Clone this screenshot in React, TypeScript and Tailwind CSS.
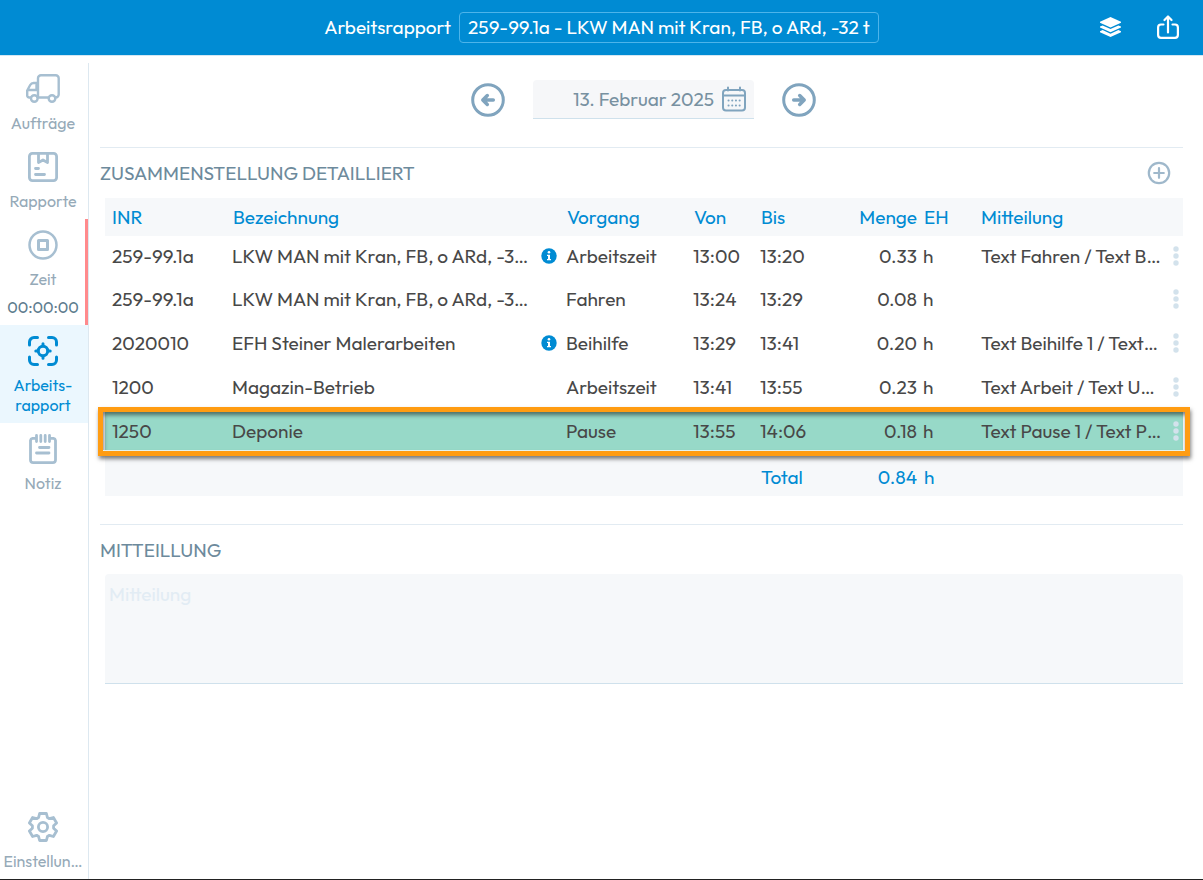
import { useState, type ReactNode } from 'react';

type Entry = {
  inr: string;
  name: string;
  info?: boolean;
  activity: string;
  from: string;
  to: string;
  amount: string;
  note: string;
  selected?: boolean;
};

const entries: Entry[] = [
  { inr: '259-99.1a', name: 'LKW MAN mit Kran, FB, o ARd, -3…', info: true, activity: 'Arbeitszeit', from: '13:00', to: '13:20', amount: '0.33', note: 'Text Fahren / Text B…' },
  { inr: '259-99.1a', name: 'LKW MAN mit Kran, FB, o ARd, -3…', activity: 'Fahren', from: '13:24', to: '13:29', amount: '0.08', note: '' },
  { inr: '2020010', name: 'EFH Steiner Malerarbeiten', info: true, activity: 'Beihilfe', from: '13:29', to: '13:41', amount: '0.20', note: 'Text Beihilfe 1 / Text…' },
  { inr: '1200', name: 'Magazin-Betrieb', activity: 'Arbeitszeit', from: '13:41', to: '13:55', amount: '0.23', note: 'Text Arbeit / Text U…' },
  { inr: '1250', name: 'Deponie', activity: 'Pause', from: '13:55', to: '14:06', amount: '0.18', note: 'Text Pause 1 / Text P…', selected: true },
];

export default function App() {
  return (
    <div className="flex min-h-screen flex-col border-b border-[#222] bg-white font-['Outfit','Lato',sans-serif] text-[19px] leading-6 text-[#484848]">
      <Header />
      <div className="flex flex-1">
        <Sidebar />
        <main className="min-w-0 flex-1">
          <DateBar />
          <Summary />
          <Message />
        </main>
      </div>
    </div>
  );
}

function Header() {
  return (
    <header className="grid h-14 shrink-0 grid-cols-[1fr_auto_1fr] items-center border-b border-[#d3e7f3] bg-[#008bd3] pb-px text-white">
      <span />
      <div className="flex items-center gap-2">
        <h1>Arbeitsrapport</h1>
        <button type="button" className="h-[31px] rounded border border-[#4db4ea] px-2 leading-7">
          259-99.1a - LKW MAN mit Kran, FB, o ARd, -32 t
        </button>
      </div>
      <div className="flex items-center justify-end gap-9 pr-6">
        <button type="button" aria-label="Ebenen">
          <LayersIcon />
        </button>
        <button type="button" aria-label="Teilen">
          <ShareIcon />
        </button>
      </div>
    </header>
  );
}

function Sidebar() {
  return (
    <nav className="mt-[7px] flex w-[89px] shrink-0 flex-col border-r border-[#dde8f0] text-base leading-5 text-[#96aab8]">
      <NavItem icon={<TruckIcon />}>Aufträge</NavItem>
      <NavItem icon={<ReportIcon />}>Rapporte</NavItem>
      <div className="border-r-[3px] border-[#ff8a8c] pl-[3px]">
        <NavItem icon={<StopIcon />}>
          Zeit
          <span className="mt-2 block text-[#5f7d8f]">00:00:00</span>
        </NavItem>
      </div>
      <NavItem icon={<TargetIcon />} active>
        Arbeits-
        <br />
        rapport
      </NavItem>
      <NavItem icon={<NoteIcon />}>Notiz</NavItem>
      <div className="mt-auto">
        <NavItem icon={<GearIcon />}>Einstellun…</NavItem>
      </div>
    </nav>
  );
}

function NavItem({ icon, active, children }: { icon: ReactNode; active?: boolean; children: ReactNode }) {
  return (
    <a
      href="#"
      className={`flex flex-col items-center gap-[9px] pt-[11px] pr-[2px] pb-2 text-center ${active ? 'bg-[#ebf7fe] text-[#008bd3]' : ''}`}
    >
      <span className={active ? 'text-[#008bd3]' : 'text-[#a7bfd1]'}>{icon}</span>
      <span>{children}</span>
    </a>
  );
}

function DateBar() {
  return (
    <div className="flex items-center justify-center gap-7 pt-6 pr-[5px] pb-7 text-[#80a4be]">
      <button type="button" aria-label="Vorheriger Tag">
        <ArrowIcon direction="left" />
      </button>
      <div className="flex h-[39px] w-[221px] items-center gap-2 rounded-t-sm border-b border-[#cfe1ec] bg-[#f6f7f9] pr-2">
        <input
          aria-label="Datum"
          defaultValue="13. Februar 2025"
          className="min-w-0 flex-1 bg-transparent text-right text-[#7891a1] outline-none"
        />
        <button type="button" aria-label="Kalender öffnen">
          <CalendarIcon />
        </button>
      </div>
      <button type="button" aria-label="Nächster Tag">
        <ArrowIcon direction="right" />
      </button>
    </div>
  );
}

function Summary() {
  return (
    <section className="mr-5 ml-[11px] border-t border-[#e2ebf2]">
      <div className="flex h-[50px] items-center justify-between pr-3">
        <h2 className="text-[#6d8a9c]">ZUSAMMENSTELLUNG DETAILLIERT</h2>
        <button type="button" aria-label="Eintrag hinzufügen" className="text-[#9fb8cb]">
          <PlusIcon />
        </button>
      </div>
      <div className="pl-[5px]">
        <table className="w-full table-fixed text-left whitespace-nowrap">
          <colgroup>
            <col className="w-[120px]" />
            <col className="w-[309px]" />
            <col className="w-[153px]" />
            <col className="w-[66px]" />
            <col className="w-[90px]" />
            <col className="w-[74px]" />
            <col className="w-[57px]" />
            <col />
            <col className="w-[22px]" />
          </colgroup>
          <thead className="bg-[#f6f8fa] text-[#008bd3]">
            <tr className="h-[38px]">
              <th scope="col" className="pl-[7px] font-normal">INR</th>
              <th scope="col" className="pl-2 font-normal">Bezeichnung</th>
              <th scope="col" className="pl-[33px] font-normal">Vorgang</th>
              <th scope="col" className="pl-[7px] font-normal">Von</th>
              <th scope="col" className="pl-2 font-normal">Bis</th>
              <th scope="col" className="text-right font-normal">Menge</th>
              <th scope="col" className="pl-[7px] font-normal">EH</th>
              <th scope="col" className="pl-[7px] font-normal">Mitteilung</th>
              <td />
            </tr>
          </thead>
          <tbody>
            {entries.map((entry) => (
              <EntryRow key={entry.from} entry={entry} />
            ))}
          </tbody>
          <tfoot className="bg-[#f6f8fa] text-[#008bd3]">
            <tr className="h-[42px]">
              <td colSpan={4} />
              <th scope="row" className="pt-1 pl-2 font-normal">Total</th>
              <td className="pt-1 text-right">0.84</td>
              <td className="pt-1 pl-[7px]">h</td>
              <td colSpan={2} />
            </tr>
          </tfoot>
        </table>
      </div>
    </section>
  );
}

function EntryRow({ entry }: { entry: Entry }) {
  return (
    <tr className={`relative h-11 *:pb-[2px] first:h-[42px] ${entry.selected ? 'bg-[#97d9c8]' : ''}`}>
      <td className="pl-[7px]">{entry.inr}</td>
      <td className="pl-[7px]">{entry.name}</td>
      <td className="pl-[7px]">
        <div className="flex items-center gap-[9px]">
          <span className="w-4">{entry.info && <InfoIcon />}</span>
          {entry.activity}
        </div>
      </td>
      <td className="pl-[6px]">{entry.from}</td>
      <td className="pl-[7px]">{entry.to}</td>
      <td className="text-right">{entry.amount}</td>
      <td className="pl-[6px]">h</td>
      <td className="pl-[7px]">{entry.note}</td>
      <td className="pl-3">
        <button type="button" aria-label="Weitere Aktionen" className="block text-[#d3e2ec]">
          <DotsIcon />
        </button>
        {entry.selected && (
          <span className="pointer-events-none absolute -inset-x-[7px] -top-[3px] -bottom-[2px] border-[5px] border-[#ff9c12] shadow-[1px_3px_4px_rgba(0,0,0,0.5),inset_0_-1px_0_#e4f3f0,inset_1px_3px_4px_rgba(0,0,0,0.5)]" />
        )}
      </td>
    </tr>
  );
}

function Message() {
  const [message, setMessage] = useState('');

  return (
    <section className="mt-7 mr-5 ml-[11px] border-t border-[#e2ebf2]">
      <label htmlFor="message" className="flex h-[49px] items-center text-[#6d8a9c]">
        MITTEILLUNG
      </label>
      <div className="pl-[5px]">
        <textarea
          id="message"
          value={message}
          onChange={(event) => setMessage(event.target.value)}
          placeholder="Mitteilung"
          className="block h-[110px] w-full resize-none rounded-t-sm border-b border-[#cfe1ec] bg-[#f6f8fa] px-1 py-2 outline-none placeholder:text-[#e2ecf4]"
        />
      </div>
    </section>
  );
}

function TruckIcon() {
  return (
    <svg className="block" width="34" height="30" viewBox="0 0 34 30" fill="none" stroke="currentColor" strokeWidth="2.400" strokeLinecap="round" strokeLinejoin="round">
      <path d="M12 23.500V4.200a3 3 0 0 1 3-3h14.700a3 3 0 0 1 3 3v16.300a3 3 0 0 1-3 3M22 23.500H12M4.500 23.500H3.200a2 2 0 0 1-2-2V16.500l3-5.500A4 4 0 0 1 8 9h4M1.500 16H10.500v-5" />
      <circle cx="8.300" cy="24.500" r="3.300" fill="#fff" />
      <circle cx="26" cy="24.500" r="3.300" fill="#fff" />
    </svg>
  );
}

function ReportIcon() {
  return (
    <svg className="block" width="30" height="30" viewBox="0 0 30 30" fill="none" stroke="currentColor" strokeWidth="2.800" strokeLinecap="round" strokeLinejoin="round">
      <rect x="1.400" y="1.400" width="27.200" height="27.200" rx="3" />
      <path d="M10.500 2v8.500l4.500-2.500 4.500 2.500V2M7.500 16.500h3M7.500 22.500h9" />
    </svg>
  );
}

function StopIcon() {
  return (
    <svg className="block" width="30" height="30" viewBox="0 0 30 30" fill="none" stroke="currentColor" strokeWidth="2.500">
      <circle cx="15" cy="15" r="13.500" />
      <rect x="10.500" y="10.500" width="9" height="9" strokeWidth="3" strokeLinejoin="round" />
    </svg>
  );
}

function TargetIcon() {
  return (
    <svg className="block" width="30" height="30" viewBox="0 0 30 30" fill="none" stroke="currentColor" strokeWidth="3" strokeLinecap="round">
      <path d="M1.500 9V6A4.500 4.500 0 0 1 6 1.500h3.500M20.500 1.500H24A4.500 4.500 0 0 1 28.500 6v3M28.500 21v3a4.500 4.500 0 0 1-4.500 4.500h-3.500M9.500 28.500H6A4.500 4.500 0 0 1 1.500 24v-3" />
      <circle cx="15" cy="15" r="4.700" strokeWidth="3" />
      <path d="M15 7.800v2M15 20.200v2M7.800 15h2M20.200 15h2" strokeWidth="3" />
    </svg>
  );
}

function NoteIcon() {
  return (
    <svg className="block" width="30" height="30" viewBox="0 0 30 30" fill="none" stroke="currentColor" strokeWidth="2.800" strokeLinecap="round" strokeLinejoin="round">
      <path d="M8.500 4.400H4.500A2.500 2.500 0 0 0 2.500 6.500V26a2.700 2.700 0 0 0 2.700 2.600h19.600a2.700 2.700 0 0 0 2.700-2.600V6.500A2.500 2.500 0 0 0 25.500 4.400h-4M8.500 1.500v6M12.800 1.500v6M17.200 1.500v6M21.500 1.500v6M11.500 13.500h9.500M8.500 19h12.500" />
    </svg>
  );
}

function GearIcon() {
  return (
    <svg className="block" width="30" height="30" viewBox="0 0 30 30" fill="none" stroke="currentColor" strokeWidth="2.800" strokeLinejoin="round">
      <path d="M11.600 1.500h6.800l1 4 2 1.200 4-1.200 3.200 5.500-3 2.800v2.400l3 2.800-3.200 5.500-4-1.200-2 1.200-1 4h-6.800l-1-4-2-1.200-4 1.200L1.400 19l3-2.800v-2.400l-3-2.800 3.200-5.500 4 1.200 2-1.200z" />
      <circle cx="15" cy="15" r="4.600" />
    </svg>
  );
}

function ArrowIcon({ direction }: { direction: 'left' | 'right' }) {
  return (
    <svg className="block" width="34" height="34" viewBox="0 0 34 34" fill="none" stroke="currentColor" strokeWidth="3" strokeLinecap="round" strokeLinejoin="round">
      <circle cx="17" cy="17" r="15.300" />
      <path d={direction === 'left' ? 'M22.300 17H12.500M16.300 12.500 11.800 17l4.500 4.500' : 'M11.700 17h9.800M17.700 12.500l4.500 4.500-4.500 4.500'} strokeWidth="3.500" />
    </svg>
  );
}

function CalendarIcon() {
  return (
    <svg className="block" width="24" height="26" viewBox="0 0 24 26" fill="none" stroke="currentColor" strokeWidth="2" strokeLinecap="round">
      <rect x="1" y="4" width="22" height="20.500" rx="3" />
      <path d="M1 9.500h22M6 1.500v3M18 1.500v3" />
      <path d="M6.500 14.500h.1M10.200 14.500h.1M13.900 14.500h.1M17.600 14.500h.1M6.500 19.500h.1M10.200 19.500h.1M13.900 19.500h.1M17.600 19.500h.1" strokeWidth="2" />
    </svg>
  );
}

function LayersIcon() {
  return (
    <svg className="block" width="21" height="20" viewBox="0 0 21 20" fill="currentColor">
      <path d="M10.500 0 21 4.800v.9l-10.500 4.700L0 5.700v-.9z" />
      <path d="M2.600 8.400 0 9.600v.9l10.500 4.700L21 10.500v-.9l-2.600-1.200-7.900 3.600z" />
      <path d="M2.600 13.100 0 14.300v.9L10.500 20 21 15.200v-.9l-2.600-1.200-7.900 3.600z" />
    </svg>
  );
}

function ShareIcon() {
  return (
    <svg className="block" width="22" height="24" viewBox="0 0 22 24" fill="none" stroke="currentColor" strokeWidth="2.200" strokeLinecap="round" strokeLinejoin="round">
      <path d="M6.500 9.500H4a3 3 0 0 0-2.900 3V20A3 3 0 0 0 4 22.900h14a3 3 0 0 0 2.900-2.900v-7.500a3 3 0 0 0-2.900-3h-2.500M11 17.500V2M7.500 5 11 1.500 14.500 5" />
    </svg>
  );
}

function PlusIcon() {
  return (
    <svg className="block" width="24" height="24" viewBox="0 0 24 24" fill="none" stroke="currentColor" strokeWidth="2.200" strokeLinecap="round">
      <circle cx="12" cy="12" r="10.200" />
      <path d="M12 7.200v9.600M7.200 12h9.600" />
    </svg>
  );
}

function InfoIcon() {
  return (
    <svg className="block" width="16" height="16" viewBox="0 0 16 16">
      <circle cx="8" cy="8" r="7.700" fill="#008bd3" />
      <circle cx="8" cy="4.300" r="1.300" fill="#fff" />
      <path d="M6 6.700h3v4.200h1v1.300H6v-1.300h1V8H6z" fill="#fff" />
    </svg>
  );
}

function DotsIcon() {
  return (
    <svg className="block" width="6" height="20" viewBox="0 0 6 20" fill="currentColor">
      <circle cx="3" cy="3" r="2.700" />
      <circle cx="3" cy="10" r="2.700" />
      <circle cx="3" cy="17" r="2.700" />
    </svg>
  );
}
